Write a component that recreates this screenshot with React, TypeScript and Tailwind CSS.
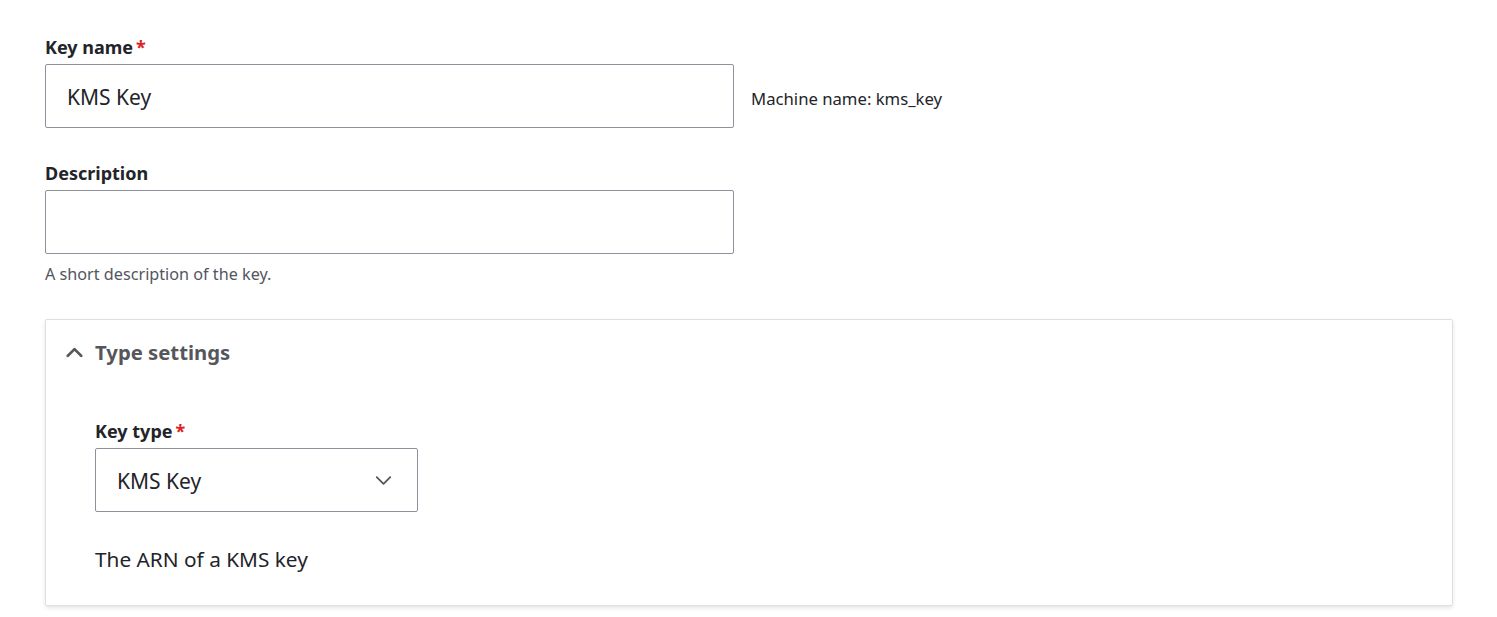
import { ChevronDown, ChevronUp } from 'lucide-react'

const FONT = { fontFamily: '"Noto Sans", "Open Sans", sans-serif' }

function Label({ text, required }: { text: string; required?: boolean }) {
  return (
    <div className="mb-[5px] text-[18px] font-bold leading-[24px] text-[#232429]">
      {text}
      {required && <span className="ml-[3px] text-[#dc2323]">*</span>}
    </div>
  )
}

export default function App() {
  return (
    <div className="min-h-screen bg-white pl-[45px] pr-[44px] pt-[35px]" style={FONT}>
      <Label text="Key name" required />
      <div className="flex items-center gap-[17px]">
        <div className="flex h-[64px] w-[689px] items-center rounded-[2px] border border-[#8e929c] px-[21px] pt-[4px] text-[21px] text-[#232429]">
          KMS Key
        </div>
        <span className="pt-[5px] text-[16.7px] text-[#232429]">Machine name: kms_key</span>
      </div>

      <div className="mt-[33px]">
        <Label text="Description" />
        <div className="h-[64px] w-[689px] rounded-[2px] border border-[#8e929c]" />
        <p className="mt-[8px] text-[16.2px] leading-[24px] text-[#545560]">A short description of the key.</p>
      </div>

      <div className="mt-[33px] rounded-[2px] border border-[#dedfe4] shadow-[0_2px_4px_rgba(0,0,0,0.1)]">
        <div className="flex h-[64px] items-center gap-[7px] pl-[15px]">
          <ChevronUp className="h-[27px] w-[27px] text-[#55565b]" strokeWidth={2.5} />
          <span className="text-[20.3px] font-bold text-[#55565b]">Type settings</span>
        </div>
        <div className="px-[49px] pt-[35px] pb-[31px]">
          <Label text="Key type" required />
          <div className="flex h-[64px] w-[323px] items-center justify-between rounded-[2px] border border-[#8e929c] pl-[21px] pr-[20px] text-[21px] text-[#232429]">
            <span className="pt-[3px]">KMS Key</span>
            <ChevronDown className="h-[27px] w-[27px] text-[#55565b]" strokeWidth={1.6} />
          </div>
          <p className="mt-[32px] text-[20.8px] leading-[30px] text-[#232429]">The ARN of a KMS key</p>
        </div>
      </div>
    </div>
  )
}
